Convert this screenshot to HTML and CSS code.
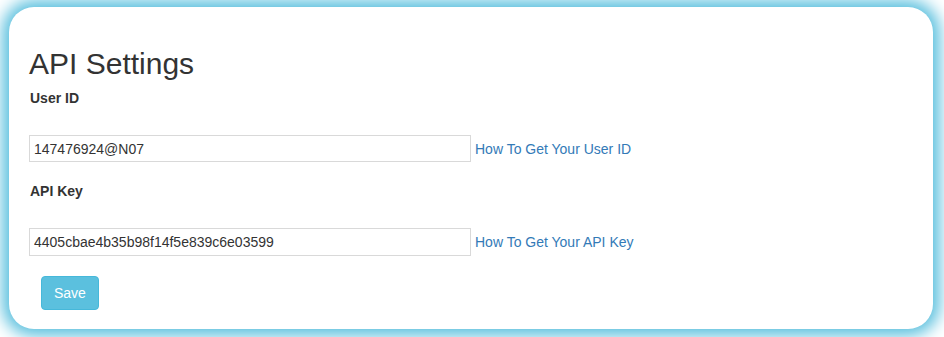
FILE: index.html
```html
<!DOCTYPE html>
<html lang="en">
<head>
<meta charset="utf-8">
<title>API Settings</title>
<link rel="stylesheet" href="styles.css">
</head>
<body>
<div class="card">
  <h2 class="title">API Settings</h2>
  <div class="field">
    <label class="field-label" for="user-id">User ID</label>
    <div class="field-row">
      <input class="field-input" id="user-id" type="text" value="147476924@N07">
      <a class="help-link" href="#">How To Get Your User ID</a>
    </div>
  </div>
  <div class="field field-second">
    <label class="field-label" for="api-key">API Key</label>
    <div class="field-row">
      <input class="field-input field-input-tall" id="api-key" type="text" value="4405cbae4b35b98f14f5e839c6e03599">
      <a class="help-link" href="#">How To Get Your API Key</a>
    </div>
  </div>
  <button class="btn-save" type="button">Save</button>
</div>
</body>
</html>
```
FILE: styles.css
```css
html, body {
  margin: 0;
  padding: 0;
  background: #ffffff;
}

body {
  padding: 7px 11px 8px 9px;
  font-family: "Liberation Sans", Arial, Helvetica, sans-serif;
  font-size: 14px;
  line-height: 20px;
  color: #333333;
}

.card {
  background: #ffffff;
  border-radius: 25px;
  box-shadow: 0 0 16px 7px #5bc0de;
  padding: 40px 20px 19px 21px;
  height: 322px;
  box-sizing: border-box;
}

.title {
  margin: 0 0 8px -1px;
  font-size: 30px;
  line-height: 33px;
  font-weight: normal;
  color: #333333;
}

.field-label {
  display: block;
  font-weight: bold;
  line-height: 20px;
  margin-bottom: 27px;
}

.field-second {
  margin-top: 19px;
}

.field-row {
  display: flex;
  align-items: center;
  gap: 4px;
  margin-left: -1px;
}

.field-input {
  box-sizing: border-box;
  width: 442px;
  height: 27px;
  margin: 0;
  padding: 0 4px;
  border: 1px solid #d9d9d9;
  border-radius: 0;
  font-family: "Liberation Sans", Arial, Helvetica, sans-serif;
  font-size: 14px;
  color: #333333;
  background: #ffffff;
  outline: none;
}

.field-input-tall {
  height: 28px;
}

.help-link {
  color: #337ab7;
  text-decoration: none;
  font-size: 14px;
  line-height: 20px;
}

.btn-save {
  display: block;
  margin: 20px 0 0 11px;
  height: 34px;
  padding: 0 12px;
  border: 1px solid #46b8da;
  border-radius: 4px;
  background: #5bc0de;
  color: #ffffff;
  font-family: "Liberation Sans", Arial, Helvetica, sans-serif;
  font-size: 14px;
  line-height: 20px;
  cursor: pointer;
}
```
